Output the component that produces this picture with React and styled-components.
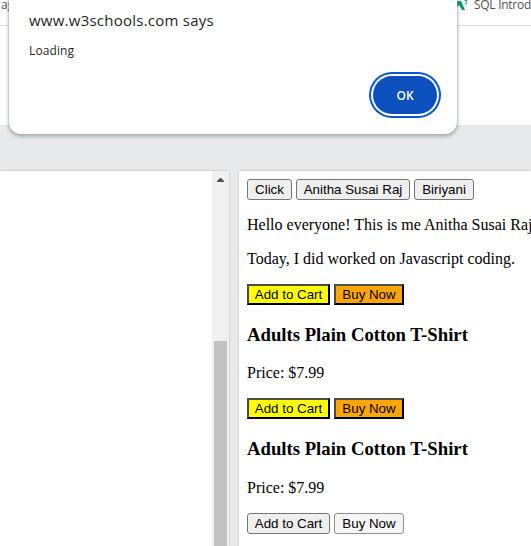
import React from "react";
import styled, { createGlobalStyle } from "styled-components";

const GlobalStyle = createGlobalStyle`
  * { box-sizing: border-box; }
  body { margin: 0; overflow: hidden; background: #e7e9eb; }
`;

const Window = styled.div`
  position: relative;
  display: flex;
  flex-direction: column;
  width: 531px;
  height: 546px;
  overflow: hidden;
  background: #e7e9eb;
`;

const BookmarksBar = styled.nav`
  display: flex;
  justify-content: space-between;
  flex: none;
  height: 26px;
  padding-left: 1px;
  border-bottom: 1px solid #dcdfe1;
  background: #fff;
  font: 12px/16px "Open Sans", "Noto Sans", sans-serif;
  color: #505050;
`;

const Bookmark = styled.span`
  display: flex;
  flex: none;
  gap: 5px;
  width: ${(p) => p.$width}px;
  margin-top: -3px;
  white-space: nowrap;
  letter-spacing: -0.28px;
`;

const BookmarkIcon = styled.svg`
  flex: none;
  width: 16px;
  height: 16px;
`;

const SiteHeader = styled.header`
  flex: none;
  height: 99px;
  background: #fff;
`;

const Workspace = styled.main`
  display: flex;
  gap: 10px;
  flex: 1;
  padding-top: 46px;
`;

const EditorPane = styled.section`
  display: flex;
  justify-content: flex-end;
  flex: none;
  width: 229px;
  background: #fff;
  box-shadow: 0 0 2px rgba(0, 0, 0, 0.25);
`;

const ScrollTrack = styled.div`
  display: flex;
  flex-direction: column;
  align-items: center;
  width: 17px;
  background: #f0f0f0;
`;

const ScrollArrow = styled.svg`
  flex: none;
  width: 7px;
  height: 4px;
  margin-top: 7px;
`;

const ScrollThumb = styled.div`
  width: 13px;
  flex: 1;
  margin-top: 159px;
  background: #c1c1c1;
`;

const ResultPane = styled.section`
  flex: 1;
  min-width: 0;
  padding: 8px 0 0 8px;
  background: #fff;
  box-shadow: 0 0 2px rgba(0, 0, 0, 0.25);
  font: 16px/18px "Liberation Serif", "Times New Roman", serif;
  color: #000;
  overflow: hidden;
`;

const ButtonRow = styled.div`
  display: flex;
  gap: 4px;
  height: 21px;
`;

const PageButton = styled.button`
  width: ${(p) => p.$width}px;
  height: 21px;
  padding: 0;
  border: ${(p) => (p.$fill ? "2px solid" : "1px solid")};
  border-color: ${(p) => (p.$fill ? "#4c4c4c #000 #000 #4c4c4c" : p.$light ? "#909090" : "#767676")};
  border-radius: ${(p) => (p.$fill ? 0 : 3)}px;
  background: ${(p) => p.$fill || (p.$light ? "#f5f5f5" : "#efefef")};
  color: #000;
  font: 13.333px/15px "Liberation Sans", Arial, sans-serif;
  white-space: nowrap;
`;

const Paragraph = styled.p`
  margin: 16px 0;
  white-space: nowrap;
`;

const ProductTitle = styled.h3`
  margin: 19px 0;
  font-size: 18.72px;
  line-height: 21px;
  white-space: nowrap;
`;

const Price = styled.p`
  margin: ${(p) => p.$offset || 0}px 0 16px;
`;

const Dialog = styled.div`
  position: absolute;
  top: -12px;
  left: 9px;
  display: flex;
  flex-direction: column;
  width: 448px;
  height: 146px;
  padding: 22px 17px 16px 20px;
  border-radius: 12px;
  background: #fff;
  box-shadow: 0 0 1px 1px rgba(165, 185, 185, 0.45), 0 2px 4px rgba(60, 75, 75, 0.45);
  font-family: "Open Sans", "Noto Sans", sans-serif;
  color: #1f1f1f;
`;

const DialogTitle = styled.h1`
  margin: 0;
  font-size: 15px;
  font-weight: 500;
  line-height: 20px;
  letter-spacing: 0.24px;
`;

const DialogMessage = styled.p`
  margin: 13px 0 0;
  font-size: 12px;
  line-height: 16px;
  letter-spacing: 0.12px;
`;

const ConfirmButton = styled.button`
  align-self: flex-end;
  width: 64px;
  height: 38px;
  margin: auto 3px 4px 0;
  padding: 2px 0 0;
  border: 0;
  border-radius: 19px;
  background: #0b50bd;
  box-shadow: 0 0 0 2px #fff, 0 0 0 4px #0b57d0;
  color: #fff;
  font: 600 12px/16px "Open Sans", "Noto Sans", sans-serif;
`;

const ProductActions = ({ cart, buy, light }) => (
  <ButtonRow>
    <PageButton $width={83} $fill={cart}>Add to Cart</PageButton>
    <PageButton $width={70} $fill={buy} $light={light}>Buy Now</PageButton>
  </ButtonRow>
);

export default function App() {
  return (
    <Window>
      <GlobalStyle />
      <BookmarksBar>
        <Bookmark $width={20}>ag</Bookmark>
        <Bookmark $width={78}>
          <BookmarkIcon viewBox="0 0 16 16">
            <path d="M0 12 4 4h4l4 9H9L6 8l-3 4z" fill="#059862" />
            <path d="M11.5 3.5h2.5l-1.2 1.6c1.6 0 1.6 2.2-1.3 1.6" fill="none" stroke="#059862" strokeWidth=".9" />
          </BookmarkIcon>
          SQL Introd
        </Bookmark>
      </BookmarksBar>
      <SiteHeader />
      <Workspace>
        <EditorPane>
          <ScrollTrack>
            <ScrollArrow viewBox="0 0 7 4"><path d="M0 4V3l3-3h1l3 3v1z" fill="#505050" /></ScrollArrow>
            <ScrollThumb />
          </ScrollTrack>
        </EditorPane>
        <ResultPane>
          <ButtonRow>
            <PageButton $width={45}>Click</PageButton>
            <PageButton $width={114}>Anitha Susai Raj</PageButton>
            <PageButton $width={60}>Biriyani</PageButton>
          </ButtonRow>
          <Paragraph>Hello everyone! This is me Anitha Susai Raj</Paragraph>
          <Paragraph>Today, I did worked on Javascript coding.</Paragraph>
          <ProductActions cart="#ffff00" buy="#ffa500" />
          <ProductTitle>Adults Plain Cotton T-Shirt</ProductTitle>
          <Price>Price: $7.99</Price>
          <ProductActions cart="#ffff00" buy="#ffa500" />
          <ProductTitle>Adults Plain Cotton T-Shirt</ProductTitle>
          <Price $offset={20}>Price: $7.99</Price>
          <ProductActions light />
        </ResultPane>
      </Workspace>
      <Dialog role="dialog">
        <DialogTitle>www.w3schools.com says</DialogTitle>
        <DialogMessage>Loading</DialogMessage>
        <ConfirmButton>OK</ConfirmButton>
      </Dialog>
    </Window>
  );
}
